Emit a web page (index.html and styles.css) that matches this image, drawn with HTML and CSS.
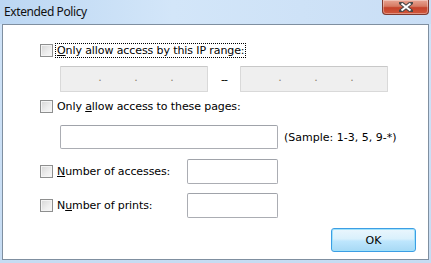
FILE: index.html
```html
<!DOCTYPE html>
<html>
<head>
<meta charset="utf-8">
<link rel="stylesheet" href="styles.css">
</head>
<body>
<div class="window">
  <div class="titlebar">
    <span class="title">Extended Policy</span>
    <div class="close"><svg width="14" height="10" viewBox="0 0 14 10"><path d="M2 1 L12 9 M12 1 L2 9" stroke="#4a4a4a" stroke-width="4" stroke-linecap="square"/><path d="M2.5 1.5 L11.5 8.5 M11.5 1.5 L2.5 8.5" stroke="#ffffff" stroke-width="2"/></svg></div>
  </div>
  <div class="client">
    <div class="row r1">
      <span class="cb"></span><span class="lbl focus"><u>O</u>nly allow access by this IP range:</span>
    </div>
    <div class="iprow">
      <div class="ip"><span>.</span><span>.</span><span>.</span></div>
      <span class="dash">--</span>
      <div class="ip"><span>.</span><span>.</span><span>.</span></div>
    </div>
    <div class="row r2">
      <span class="cb"></span><span class="lbl">Only <u>a</u>llow access to these pages:</span>
    </div>
    <div class="pagerow">
      <div class="input pages"></div>
      <span class="sample">(Sample: 1-3, 5, 9-*)</span>
    </div>
    <div class="row r3">
      <span class="cb"></span><span class="lbl wide"><u>N</u>umber of accesses:</span>
      <div class="input num"></div>
    </div>
    <div class="row r4">
      <span class="cb"></span><span class="lbl wide">N<u>u</u>mber of prints:</span>
      <div class="input num"></div>
    </div>
    <div class="btnrow">
      <div class="ok">OK</div>
    </div>
  </div>
</div>
</body>
</html>
```

FILE: styles.css
```css
html, body {
  margin: 0;
  padding: 0;
}
body {
  width: 431px;
  height: 263px;
  overflow: hidden;
  font-family: "DejaVu Sans", "Liberation Sans", sans-serif;
  font-size: 11px;
  color: #000;
}
.window {
  width: 431px;
  height: 263px;
  box-sizing: border-box;
  background: linear-gradient(to bottom, #c3dbf3 0px, #cfe3f8 24px, #c6dcf3 100%);
  display: flex;
  flex-direction: column;
}
.titlebar {
  height: 24px;
  display: flex;
  align-items: flex-start;
  justify-content: space-between;
  background: linear-gradient(to right, #bcd7f3 0%, #d3e6f9 40%, #c9def5 100%);
}
.title {
  font-family: "Noto Sans", "Open Sans", sans-serif;
  font-size: 12px;
  color: #111;
  margin: 3px 0 0 4px;
  letter-spacing: -0.4px;
}
.close {
  width: 45px;
  height: 14px;
  margin-right: 2px;
  border: 1px solid #7d3a30;
  border-top: none;
  border-radius: 0 0 4px 4px;
  background: linear-gradient(to bottom, #e8a493 0%, #d67a63 45%, #c5422a 55%, #d0573c 100%);
  display: flex;
  align-items: center;
  justify-content: center;
  box-shadow: inset 0 0 0 1px rgba(255,255,255,0.35);
}
.client {
  flex: 1;
  margin: 0 2px 3px 2px;
  border: 1px solid #7f8fa0;
  background: #fff;
  padding: 18px 0 0 37px;
}
.row {
  display: flex;
  align-items: center;
  height: 15px;
}
.cb {
  width: 11px;
  height: 11px;
  border: 1px solid #8e8f8f;
  background: linear-gradient(135deg, #d6d6d6 0%, #eeeeee 60%, #f8f8f8 100%);
  box-shadow: inset 0 0 0 1px #f4f4f4;
  flex: none;
}
.lbl {
  margin-left: 3px;
  padding: 0 1px;
  line-height: 13px;
  white-space: nowrap;
  letter-spacing: -0.1px;
}
.focus {
  outline: 1px dotted #000;
}
.lbl.wide {
  width: 129px;
}
.iprow {
  display: flex;
  align-items: center;
  margin: 8px 0 0 20px;
}
.ip {
  width: 142px;
  height: 24px;
  padding-left: 4px;
  border: 1px solid #d9d9d9;
  border-top-color: #c8c8c8;
  background: #efefef;
  border-radius: 1px;
  display: flex;
  align-items: center;
  justify-content: center;
  gap: 32px;
  color: #8a7f70;
  font-size: 11px;
  line-height: 11px;
}
.ip span {
  display: block;
  width: 4px;
  text-align: center;
  margin-top: -3px;
}
.dash {
  width: 32px;
  text-align: center;
  letter-spacing: -1px;
  margin-top: 1px;
}
.r2 {
  margin-top: 7px;
}
.pagerow {
  display: flex;
  align-items: center;
  margin: 11px 0 0 20px;
}
.input {
  border: 1px solid #abadb3;
  border-top-color: #a0a3aa;
  border-radius: 2px;
  background: #fff;
}
.pages {
  width: 216px;
  height: 22px;
}
.sample {
  margin-left: 6px;
}
.r3 {
  height: 25px;
  margin-top: 10px;
}
.r4 {
  height: 25px;
  margin-top: 9px;
}
.num {
  width: 89px;
  height: 23px;
}
.btnrow {
  display: flex;
  justify-content: flex-end;
  margin: 10px 12px 0 0;
}
.ok {
  width: 83px;
  height: 22px;
  border: 1px solid #3c9ee4;
  border-radius: 3px;
  background: linear-gradient(to bottom, #eaf6fd 0%, #d9f0fc 45%, #bee6fd 55%, #a7d9f5 100%);
  box-shadow: inset 0 0 0 1px #9fe1fb;
  display: flex;
  align-items: center;
  justify-content: center;
}
```
